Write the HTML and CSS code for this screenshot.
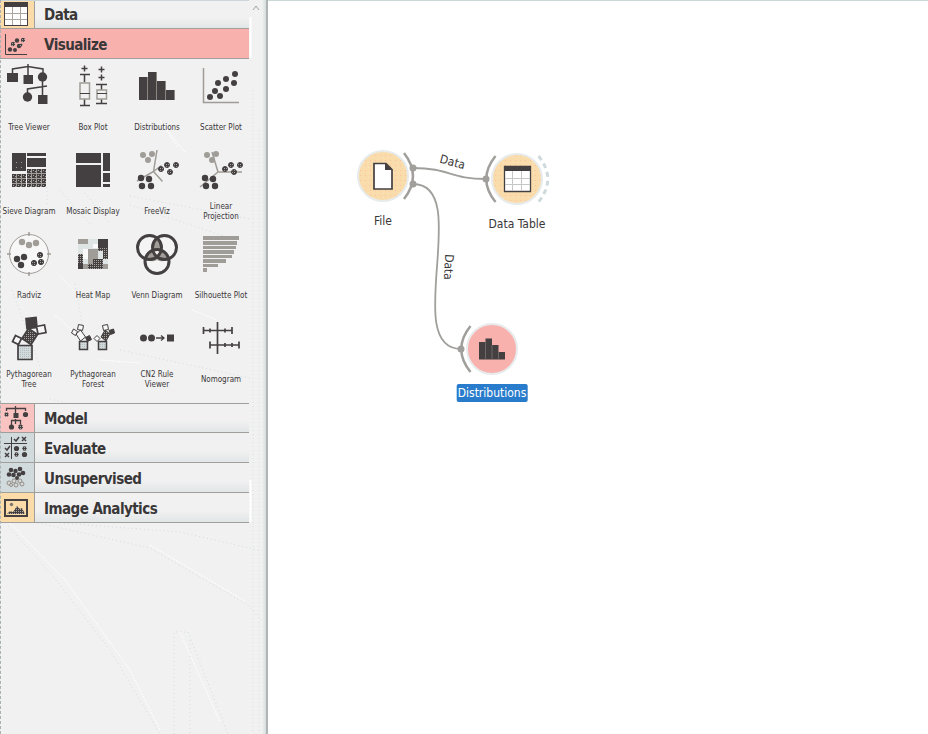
FILE: index.html
```html
<!DOCTYPE html>
<html lang="en">
<head>
<meta charset="utf-8">
<title>Workflow</title>
<link rel="stylesheet" href="styles.css">
</head>
<body>
<svg class="defs" width="0" height="0" aria-hidden="true">
  <defs>
    <pattern id="hatch" width="2" height="2" patternUnits="userSpaceOnUse"><rect width="2" height="2" fill="#444041"/><rect width="1" height="1" fill="#a9a5a0"/></pattern>
    <pattern id="mesh" width="5" height="5" patternUnits="userSpaceOnUse" x="12" y="174"><rect width="5" height="5" fill="#444041"/><path d="M0 4.500h5M4.500 0v5" stroke="#a09c97"/><path d="M1 1h1v1H1zM3 2h1v1H3z" fill="#aaa69f"/></pattern>
    <pattern id="pale" width="2" height="2" patternUnits="userSpaceOnUse"><rect width="2" height="2" fill="#d1dadd"/><rect width="1" height="1" fill="#b7bbba"/></pattern>
    <pattern id="speck" width="5" height="5" patternUnits="userSpaceOnUse"><rect width="5" height="5" fill="#fadcab"/><rect width="1" height="1" fill="#f9c1a9"/><rect x="3" y="2" width="1" height="1" fill="#f4e3c4"/></pattern>
  </defs>
</svg>
<div class="app">
  <aside class="toolbox">
    <svg class="grain" viewBox="0 0 267 734" aria-hidden="true">
      <g fill="none" stroke="#d3dddf" stroke-dasharray="1 3">
        <path d="M8 526L52 575L110 650L160 734M34 522L150 548L248 605L263 622M60 523L180 532L262 551M174 734V632L188 632L228 734M190 640V734M47 187V205M60 190L92 226M85 193L110 224M130 196L250 219M130 205L230 238M12 290L45 380M75 284L86 345M120 350L250 378M50 399L70 404"/>
        <path d="M253 90V734M259 130V734"/>
      </g>
      <g fill="none" stroke="#fff" stroke-dasharray="2 1">
        <path d="M160 120L178 148M167 130L185 152M60 276L74 291M55 315L95 350M10 523L65 580L130 670L160 730M150 545L245 601M180 632L220 722M100 360L140 363M192 310L217 320"/>
      </g>
      <path d="M250.500 17V58M250.500 480V522" stroke="#fff" stroke-width="2"/>
    </svg>
    <svg class="scroll-up" viewBox="0 0 8 6"><path d="M1 5L4 1L7 5" fill="none" stroke="#9aa3a5"/></svg>

    <header class="cat first">
      <span class="cat-icon amber"><svg viewBox="0 0 34 28"><rect x="4.500" y="2.500" width="23" height="22" fill="#fff" stroke="#444041"/><path d="M4 1h24v5H4z" fill="#444041"/><path d="M12.500 6v18M20.500 6v18M5 12.500h22M5 18.500h22" stroke="#aaa69f"/></svg></span>
      <h2>Data</h2>
    </header>
    <header class="cat active">
      <span class="cat-icon"><svg viewBox="0 0 34 28"><path d="M5.500 5v20.500H27" fill="none" stroke="#444041"/><g fill="#444041"><circle cx="10" cy="20.500" r="2.200"/><circle cx="15" cy="21" r="2"/><circle cx="17" cy="11.500" r="2.200"/><circle cx="19" cy="17" r="2.200"/></g><g fill="url(#hatch)"><circle cx="13" cy="15" r="2.200"/><circle cx="23" cy="11" r="2.200"/><circle cx="21" cy="16" r="1.500"/></g></svg></span>
      <h2>Visualize</h2>
    </header>

    <section class="widgets">
      <div class="widget"><svg viewBox="5 62 48 48"><path d="M28 64v12M12.500 75v-6L28 66.500L43 69v5M42.500 81v15M27.500 94v-5L47 86" fill="none" stroke="#444041" stroke-width="1.500"/><path d="M7 73h11v9H7zM23.500 75h9.500v9h-9.500zM38 95h9.500v9H38z" fill="#444041"/><circle cx="42.500" cy="77" r="4.700" fill="#444041"/><circle cx="27.500" cy="97" r="4.700" fill="#444041"/></svg><p>Tree Viewer</p></div>
      <div class="widget"><svg viewBox="69 62 48 48"><g fill="none" stroke="#444041" stroke-width="1.500"><path d="M81.500 68.500h6M84.500 65.500v6M98.500 69.500h6M101.500 66.500v6M98.500 77.500h6M101.500 74.500v6M80 74.500h10M84.500 75v7M84.500 99v6M80 105.500h10M96 84.500h11M101.500 85v5M101.500 99v4M96 103.500h11"/></g><g fill="#f1f1f1" stroke="#a09c97" stroke-width="1.500"><path d="M80 83h9.500v16H80zM97 90h9.500v9H97z"/></g><path d="M80 93.500h10M97 93.500h10" stroke="#444041"/></svg><p>Box Plot</p></div>
      <div class="widget"><svg viewBox="133 62 48 48"><path d="M139 77h9v23h-9zM148 72h9v28h-9zM157 81h9v19h-9zM166 90h9v10h-9z" fill="#444041"/><path d="M147.500 77v23M156.500 72v28M165.500 81v19M174.500 90v10" stroke="#8b8783"/></svg><p>Distributions</p></div>
      <div class="widget"><svg viewBox="197 62 48 48"><path d="M203.500 68v34.500H239" fill="none" stroke="#a09c97" stroke-width="1.500"/><g fill="#444041"><circle cx="210" cy="97" r="3"/><circle cx="215" cy="91" r="3"/><circle cx="220" cy="96" r="3"/><circle cx="218" cy="83" r="3"/><circle cx="226" cy="79" r="3"/><circle cx="226" cy="89" r="3"/><circle cx="235" cy="74" r="3"/><circle cx="234" cy="83" r="3"/></g></svg><p>Scatter Plot</p></div>

      <div class="widget"><svg viewBox="5 146 48 48"><path d="M12 153h14v18H12zM27 153h19v3H27zM27 158h19v9H27z" fill="#444041"/><path d="M16 162h1v1h-1zM21 162h1v1h-1zM16 167h1v1h-1zM21 167h1v1h-1z" fill="#a09c97"/><path d="M12 174h14v13H12zM27 169h19v18H27z" fill="url(#mesh)"/></svg><p>Sieve Diagram</p></div>
      <div class="widget"><svg viewBox="69 146 48 48"><path d="M76 153h25v10H76zM76 165h25v22H76zM103 153h7v18h-7zM103 173h7v9h-7zM103 184h7v3h-7z" fill="#444041"/></svg><p>Mosaic Display</p></div>
      <div class="widget"><svg viewBox="133 146 48 48"><path d="M157 150l-3.500 21.500L137 181M153.500 171.500l9 10M153.500 171.500l8-6" fill="none" stroke="#a09c97" stroke-width="1.500"/><g fill="#a09c97"><circle cx="143" cy="155" r="3"/><circle cx="152" cy="154" r="3"/><circle cx="148" cy="160" r="3"/></g><g fill="url(#hatch)" stroke="#444041"><circle cx="161" cy="169" r="2.500"/><circle cx="167" cy="165" r="2.500"/><circle cx="176" cy="165" r="2.500"/><circle cx="170" cy="172" r="2.500"/></g><g fill="#444041"><circle cx="141" cy="178" r="3.200"/><circle cx="149" cy="179" r="3.200"/><circle cx="142" cy="186" r="3.200"/><circle cx="151" cy="186" r="3.200"/></g></svg><p>FreeViz</p></div>
      <div class="widget"><svg viewBox="197 146 48 48"><path d="M212 152l6 20h24M218 172l-18 15" fill="none" stroke="#a09c97" stroke-width="1.500"/><g fill="#a09c97"><circle cx="207" cy="155" r="3"/><circle cx="216" cy="154" r="3"/><circle cx="212" cy="160" r="3"/></g><g fill="url(#hatch)" stroke="#444041"><circle cx="225" cy="169" r="2.500"/><circle cx="231" cy="165" r="2.500"/><circle cx="240" cy="165" r="2.500"/><circle cx="234" cy="172" r="2.500"/></g><g fill="#444041"><circle cx="205" cy="178" r="3.200"/><circle cx="213" cy="179" r="3.200"/><circle cx="206" cy="186" r="3.200"/><circle cx="215" cy="186" r="3.200"/></g></svg><p>Linear<br>Projection</p></div>

      <div class="widget"><svg viewBox="5 230 48 48"><circle cx="29" cy="254" r="19.500" fill="#f7f7f7" stroke="#a09c97"/><path d="M29 232v4M29 272v4M7 254h4M47 254h4" stroke="#a09c97" stroke-width="1.500"/><g fill="#a09c97"><circle cx="22" cy="242" r="3.200"/><circle cx="29" cy="245" r="3.200"/><circle cx="36" cy="243" r="3.200"/></g><g fill="#444041"><circle cx="17" cy="259" r="3.200"/><circle cx="24" cy="257" r="3.200"/><circle cx="21" cy="265" r="3.200"/></g><g fill="url(#hatch)" stroke="#444041"><circle cx="40" cy="255" r="2.600"/><circle cx="34" cy="263" r="2.600"/><circle cx="41" cy="262" r="2.600"/></g></svg><p>Radviz</p></div>
      <div class="widget"><svg viewBox="69 230 48 48"><path d="M78 239h30v30H78z" fill="#dfe4e5"/><path d="M78 239h10v5H78zM88 249h10v15H88zM98 259h5v10h-5zM103 264h5v5h-5zM83 264h5v5h-5z" fill="#a09c97"/><path d="M98 239h10v8H98z" fill="#444041"/><path d="M78 254h5v15h-5zM93 259h10v10H93zM88 264h5v5h-5zM103 247h5v12h-5zM98 247h5v4h-5z" fill="url(#hatch)"/><path d="M78 264h5v5h-5z" fill="#444041"/><path d="M83 249h5v10h-5zM93 244h5v4h-5z" fill="#fafafa"/></svg><p>Heat Map</p></div>
      <div class="widget"><svg viewBox="133 230 48 48"><g fill="#f4f4f4"><circle cx="149.500" cy="247.500" r="12"/><circle cx="164.500" cy="247.500" r="12"/><circle cx="157" cy="261.500" r="12"/></g><path d="M157 238q6 6 5 13h-10q-1-7 5-13zM146 259q1-7 7-9l4 10q-6 3-11-1zM168 259q-1-7-7-9l-4 10q6 3 11-1z" fill="#a09c97"/><g fill="none" stroke="#444041" stroke-width="3"><circle cx="149.500" cy="247.500" r="12"/><circle cx="164.500" cy="247.500" r="12"/><circle cx="157" cy="261.500" r="12"/></g></svg><p>Venn Diagram</p></div>
      <div class="widget"><svg viewBox="197 230 48 48"><path d="M203 236h36v4h-36zM203 241h34v4h-34zM203 246h33v3h-33zM203 250h31v4h-31zM203 255h29v3h-29zM203 259h23v4h-23zM203 264h15v3h-15zM203 268h4v4h-4z" fill="#a09c97"/></svg><p>Silhouette Plot</p></div>

      <div class="widget"><svg viewBox="5 314 48 48"><g stroke="#444041" stroke-width="1.700"><path d="M18 345.500h14v14H18z" fill="url(#pale)"/><path d="M28.500 328.500l9 6-6.500 10-9-6z" fill="url(#hatch)"/><path d="M15.500 335.500l6 3-3 6-6-3z" fill="#f7f7f7"/><path d="M26 318.500l10-1 1 10-10 1z" fill="#444041"/><path d="M36.500 326.500l8-1.500 1.500 7.500-8 1.500z" fill="#f7f7f7"/></g></svg><p>Pythagorean<br>Tree</p></div>
      <div class="widget"><svg viewBox="69 314 48 48"><g stroke="#444041" stroke-width="1"><path d="M79.500 341.500h8v8h-8zM98.500 341.500h8v8h-8z" fill="url(#pale)" stroke-width="1.500"/><path d="M80.500 330l-4.500 4 4.500 7 5-4zM78.500 324.500l5 1-1 5-5-1zM73.500 329l4 2.500-2 4-4-2.500zM107.500 324.500l1 5-5 1-1-5zM97 335.500l3 3-3 3-3-3z" fill="#f7f7f7"/><path d="M105 330l5 4-4 7-5-4z" fill="url(#hatch)"/><path d="M89.500 335.500l2 4-4 2-2-4zM113.500 329l1 4-4 1.500-1.500-4z" fill="#444041"/></g></svg><p>Pythagorean<br>Forest</p></div>
      <div class="widget"><svg viewBox="133 314 48 48"><g fill="#444041"><circle cx="143.500" cy="338" r="3.500"/><circle cx="151.500" cy="338" r="3.500"/><path d="M167 334.500h7v7h-7z"/></g><path d="M156 338h8M161 335.500l3 2.500-3 2.500" fill="none" stroke="#444041" stroke-width="1.300"/></svg><p>CN2 Rule<br>Viewer</p></div>
      <div class="widget"><svg viewBox="197 314 48 48"><path d="M217.500 322v32M203 330.500h29M210 345h29M203.500 327v7M232 327v7M210 341.500v7M239 341.500v7M210 328.500v4M225 328.500v4M225 343v4M232 343v4" fill="none" stroke="#444041" stroke-width="1.700"/></svg><p>Nomogram</p></div>
    </section>

    <header class="cat short">
      <span class="cat-icon rose"><svg viewBox="0 0 34 28"><path d="M6.500 7V4.500h19V7M15.500 2v7M15.500 15v5M11.500 21v-4.500h9V21" fill="none" stroke="#444041" stroke-width="1.300"/><path d="M13.500 9h5v5h-5z" fill="#444041"/><circle cx="25.500" cy="10.500" r="2.600" fill="#444041"/><circle cx="11.500" cy="23" r="2.600" fill="#444041"/><circle cx="6.500" cy="10.500" r="2.200" fill="url(#hatch)"/><circle cx="20.500" cy="23" r="2.500" fill="url(#hatch)"/></svg></span>
      <h2>Model</h2>
    </header>
    <header class="cat">
      <span class="cat-icon steel"><svg viewBox="0 0 34 28"><path d="M11.500 4v22M4 10.500h23" stroke="#444041"/><path d="M14 6l2 2 3-4M5 15l2 2 3-4M22 4l4 4M26 4l-4 4M5 20l4 4M9 20l-4 4" fill="none" stroke="#444041" stroke-width="1.500"/><circle cx="16.500" cy="15.500" r="2.600" fill="#444041"/><circle cx="24.500" cy="21.500" r="2.600" fill="#444041"/><circle cx="24.500" cy="15.500" r="2.200" fill="url(#hatch)"/><circle cx="16.500" cy="21.500" r="2.200" fill="url(#hatch)"/></svg></span>
      <h2>Evaluate</h2>
    </header>
    <header class="cat">
      <span class="cat-icon steel"><svg viewBox="0 0 34 28"><g fill="#444041"><circle cx="11" cy="7" r="2.300"/><circle cx="20" cy="6" r="2.300"/><circle cx="15.500" cy="8" r="2.200"/><circle cx="9" cy="11.500" r="2.300"/><circle cx="13.500" cy="12" r="2.300"/><circle cx="23" cy="10" r="2.300"/><circle cx="19" cy="11.500" r="2.300"/><circle cx="17" cy="15" r="2"/></g><g fill="#d8d8d4" stroke="#928e89"><circle cx="9" cy="20" r="2"/><circle cx="14" cy="18" r="2"/><circle cx="20" cy="18" r="2"/><circle cx="22" cy="21" r="2"/><circle cx="16" cy="22" r="2"/><circle cx="11" cy="22" r="1.500"/></g></svg></span>
      <h2>Unsupervised</h2>
    </header>
    <header class="cat">
      <span class="cat-icon amber"><svg viewBox="0 0 34 28"><path d="M5 7h22v16H5z" fill="none" stroke="#444041" stroke-width="2"/><path d="M7 21l3-3 3 1 4-6 3 3 2-1 3 6z" fill="url(#hatch)"/><circle cx="11.500" cy="11.500" r="1.700" fill="#7b7672"/></svg></span>
      <h2>Image Analytics</h2>
    </header>
  </aside>

  <main class="canvas">
    <svg class="scene" viewBox="268 0 660 734">
      <g fill="none" stroke="#a09f9c" stroke-width="1.800">
        <path d="M413 168C450 168 450 179 486 179"/>
        <path d="M413 184C474 184 400 349 461 349"/>
      </g>
      <g fill="none" stroke="#a09f9c" stroke-width="2.500">
        <path d="M404 153Q422 176 404 199"/>
        <path d="M495.500 156Q477 179 495.500 202"/>
        <path d="M470.500 326Q452 349 470.500 372"/>
        <path d="M538.500 156Q557 179 538.500 202" stroke="#d0dadd" stroke-width="3" stroke-dasharray="5 4"/>
      </g>
      <g fill="#a09f9c"><circle cx="413" cy="168" r="3.500"/><circle cx="413" cy="184" r="3.500"/><circle cx="486" cy="179" r="3.500"/><circle cx="461" cy="349" r="3.500"/></g>
      <g stroke="#e7ebec" stroke-width="2"><circle cx="383" cy="176" r="25" fill="url(#speck)"/><circle cx="517" cy="179" r="25" fill="url(#speck)"/><circle cx="492" cy="349" r="25" fill="#f9b1ae"/></g>
      <path d="M374 163.500h12l6 6v19.500h-18z" fill="#fff" stroke="#444041" stroke-width="1.700"/><path d="M385 163v7h7z" fill="#444041"/>
      <path d="M504.500 166.500h26v25h-26z" fill="#fff" stroke="#444041" stroke-width="1.300"/><path d="M504 166h27v5h-27z" fill="#444041"/><path d="M512.500 171v20M521.500 171v20M505 178.500h25M505 184.500h25" stroke="#c5c7c5"/>
      <path d="M479 342h6.500v17.500H479zM485.500 338.500h6.500v21h-6.500zM492 345h6.500v14.500H492zM498.500 352h6.500v7.500h-6.500z" fill="#444041"/><path d="M485.500 342v17.500M492 345v14.500M498.500 352v7.500" stroke="#837a78" stroke-width=".7"/>
      <g class="link-label"><text transform="translate(452.500 162) rotate(15)" y="4">Data</text><text transform="translate(448.500 267) rotate(93)" y="4">Data</text></g>
    </svg>
    <span class="node-label file">File</span>
    <span class="node-label table">Data Table</span>
    <span class="node-label dist">Distributions</span>
  </main>
</div>
</body>
</html>
```
FILE: styles.css
```css
* { box-sizing: border-box; }
body { margin: 0; background: #fff; color: #393738; font-family: "DejaVu Sans Condensed", "DejaVu Sans", sans-serif; }
.defs { position: absolute; }
.app { display: flex; width: 928px; height: 734px; overflow: hidden; }

.toolbox { position: relative; flex: 0 0 268px; background: #f1f1f1; overflow: hidden; border-right: 2px solid #b1b4b5; }
.toolbox::before { content: ""; position: absolute; z-index: 3; inset: 0 auto 0 0; border-left: 1px dashed #a9b1b2; }
.toolbox::after { content: ""; position: absolute; inset: 0 0 0 auto; width: 4px; background: linear-gradient(90deg, #f1f1f1, #d5dddf); }
.grain { position: absolute; left: 0; top: 0; width: 267px; height: 734px; }
.scroll-up { position: absolute; left: 252px; top: 5px; width: 8px; height: 6px; }

.cat { position: relative; display: flex; width: 249px; height: 30px; border-bottom: 1px solid #a09f9c; background: linear-gradient(#f1f1f1 60%, #e2e6e7); }
.cat.first { height: 29px; border-top: 1px solid #ccd6d8; }
.cat.short { height: 29px; }
.cat.active { background: #f9b1ae; }
.cat-icon { flex: 0 0 35px; border-right: 1px solid #a09f9c; }
.active .cat-icon { border-color: transparent; }
.cat-icon svg { display: block; width: 34px; height: 28px; }
.amber { background: #fbdca9; }
.steel { background: #d1dadd; }
.rose { background: #f9c3c1; }
.cat h2 { margin: 0 0 0 9px; font-size: 15px; letter-spacing: -.55px; line-height: 32px; font-weight: bold; white-space: nowrap; }
.cat.first h2 { line-height: 28px; }
.cat.short h2 { line-height: 30px; }

.widgets { position: relative; display: grid; grid-template-columns: repeat(4, 64px); grid-auto-rows: 84px; width: 256px; height: 345px; margin-left: -3px; border-bottom: 1px solid #a09f9c; clip-path: inset(0 4px 0 0); }
.widget { display: flex; flex-direction: column; align-items: center; padding-top: 3px; }
.widget svg { flex: 0 0 48px; width: 48px; height: 48px; }
.widget p { display: flex; align-items: center; justify-content: center; height: 33px; margin: 0; padding-top: 2px; font-size: 8px; line-height: 10px; text-align: center; white-space: nowrap; }

.canvas { position: relative; flex: 1; border-top: 1px solid #ccd8d8; }
.scene { position: absolute; left: 0; top: -1px; width: 660px; height: 734px; }
.link-label text { font-size: 12px; text-anchor: middle; fill: #393738; }
.node-label { position: absolute; transform: translateX(-50%); padding: 0 2px; font-size: 12px; line-height: 18px; white-space: nowrap; }
.file { left: 115px; top: 211px; }
.table { left: 249px; top: 214px; }
.dist { left: 224px; top: 383px; padding: 0 1px; border-radius: 2px; background: #287ccb; color: #fff; }
```
